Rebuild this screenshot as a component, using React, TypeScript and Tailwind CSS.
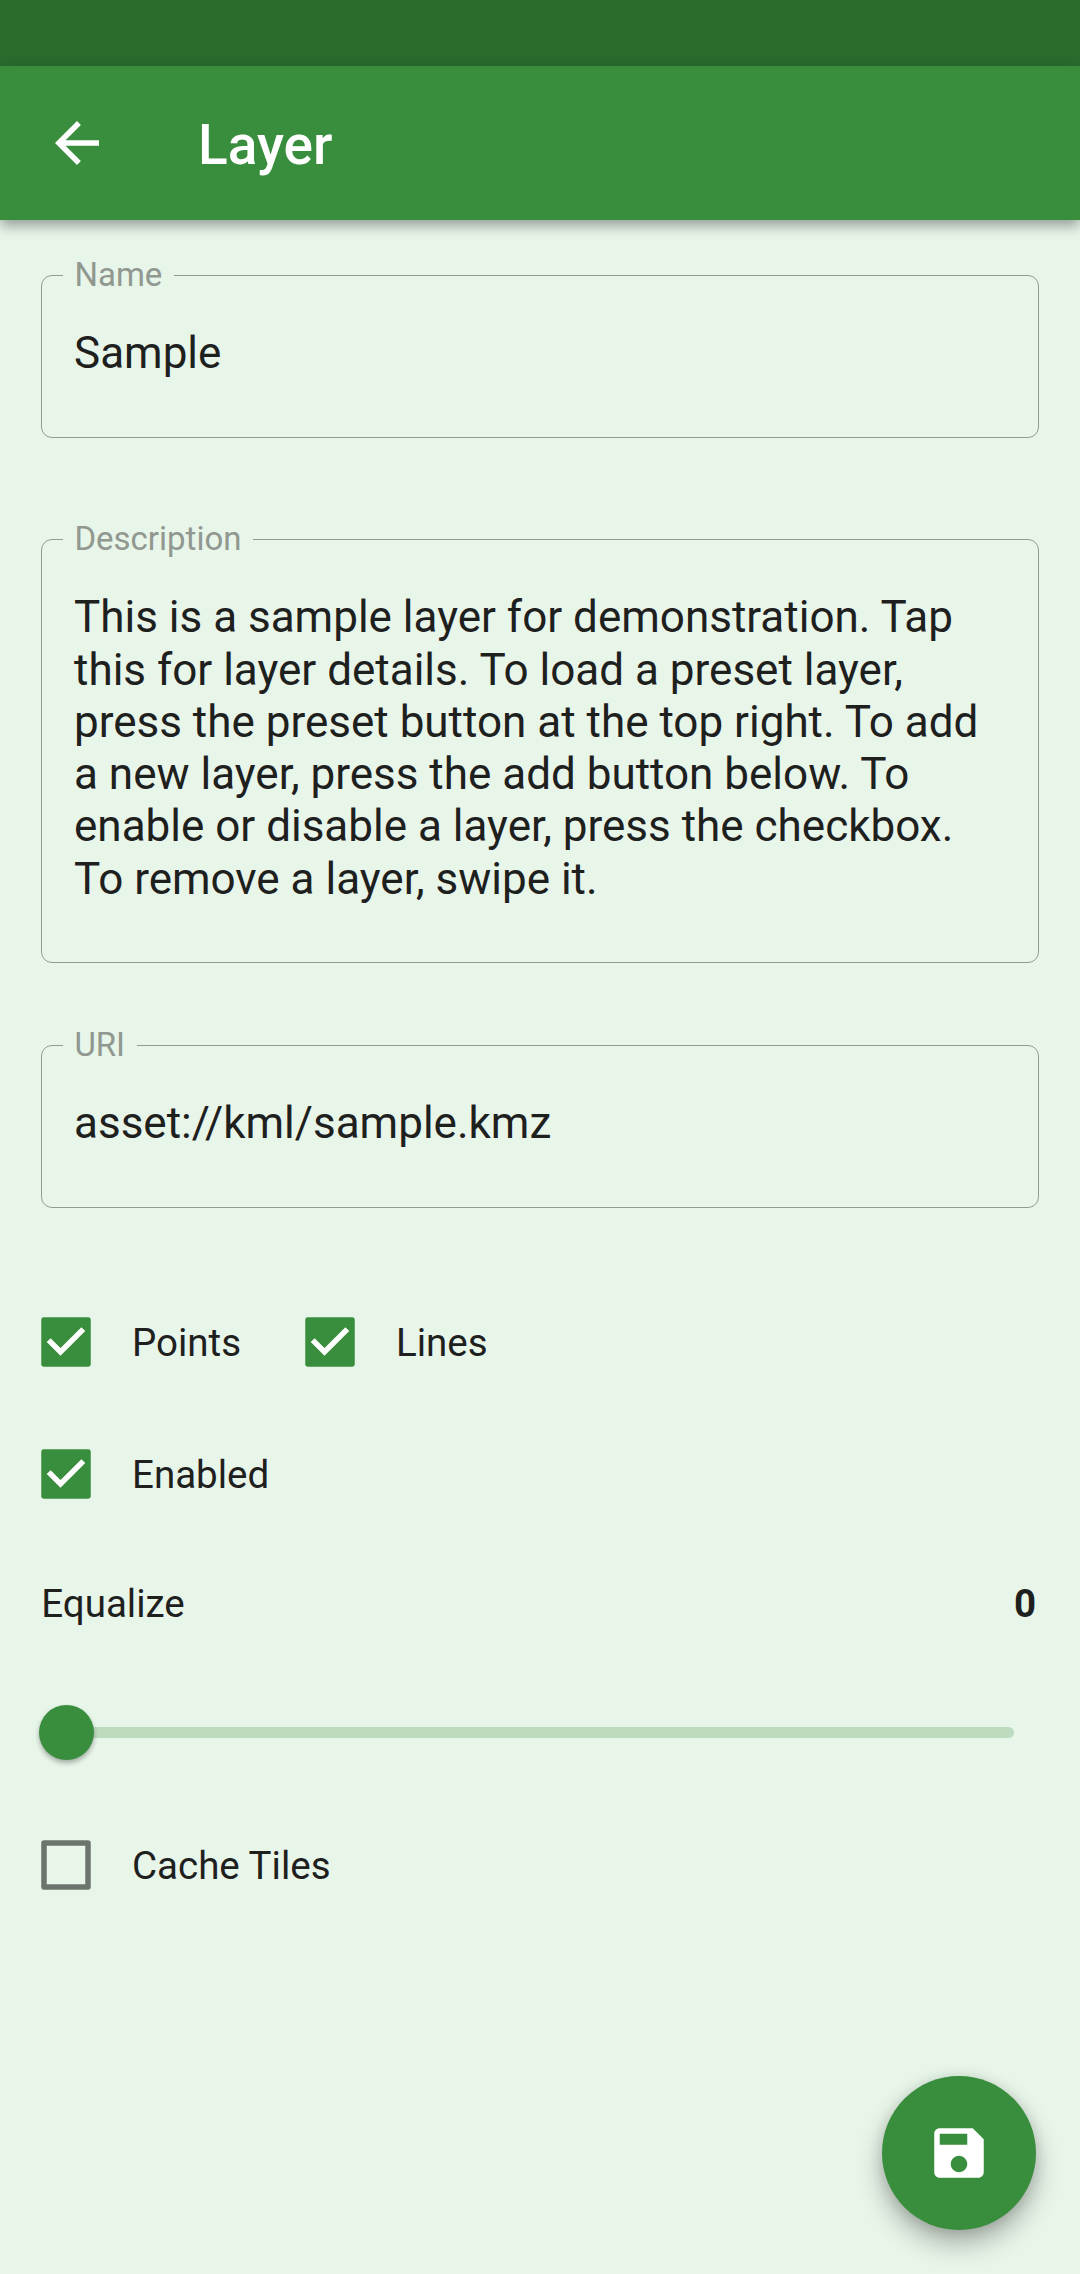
import type { ReactNode } from "react";

function Field({ label, className, children }: { label: string; className: string; children: ReactNode }) {
  return (
    <div className={"relative rounded-[11px] border border-[#929c93] px-8 pt-[51.3px] text-[44px] leading-[52.3px] " + className}>
      <span className="absolute -top-[21px] left-[21px] bg-[#e8f5e9] px-[11.4px] text-[33px] leading-[39px] text-[#909890]">
        {label}
      </span>
      {children}
    </div>
  );
}

function Check({ label, checked, className = "" }: { label: string; checked: boolean; className?: string }) {
  return (
    <div className={"flex h-[132px] items-center " + className}>
      <svg viewBox="0 0 24 24" className={checked ? "size-[66px] text-[#388e3c]" : "size-[66px] text-[#6c756d]"} fill="currentColor">
        {checked ? (
          <>
            <rect x="3" y="3" width="18" height="18" rx="0.9" />
            <path fill="none" stroke="#fff" strokeWidth="2" d="M5.7 11.3 10 15.6 18.3 7.3" />
          </>
        ) : (
          <path fillRule="evenodd" d="M4 3h16a1 1 0 0 1 1 1v16a1 1 0 0 1-1 1H4a1 1 0 0 1-1-1V4a1 1 0 0 1 1-1Zm1 2v14h14V5Z" />
        )}
      </svg>
      <span className="ml-[32.75px] mt-[2px] text-[38.5px] leading-[46px]">{label}</span>
    </div>
  );
}

export default function App() {
  return (
    <div className="relative flex h-[2274px] w-[1080px] flex-col overflow-hidden bg-[#e8f5e9] font-['Roboto',sans-serif] text-[#1e201e]">
      <div className="h-[66px] shrink-0 bg-[#2a6a2d]" />
      <header className="flex h-[154px] shrink-0 items-center bg-[#388e3c] pl-11 text-white shadow-[0_6px_12px_rgba(0,0,0,0.35)]">
        <svg viewBox="0 0 24 24" className="size-[66px]" fill="currentColor">
          <path d="M20 11H7.83l5.59-5.59L12 4l-8 8 8 8 1.41-1.41L7.83 13H20v-2z" />
        </svg>
        <h1 className="ml-[88px] mt-[3px] text-[55px] font-medium leading-[64px]">Layer</h1>
      </header>
      <main className="flex flex-col px-[41px] pt-[55px]">
        <Field label="Name" className="h-[163px]">Sample</Field>
        <Field label="Description" className="mt-[101px] h-[424px]">
          This is a sample layer for demonstration. Tap<br />
          this for layer details. To load a preset layer,<br />
          press the preset button at the top right. To add<br />
          a new layer, press the add button below. To<br />
          enable or disable a layer, press the checkbox.<br />
          To remove a layer, swipe it.
        </Field>
        <Field label="URI" className="mt-[82px] h-[163px]">asset://kml/sample.kmz</Field>
        <div className="-ml-[7.75px] mt-[68px] flex">
          <Check label="Points" checked className="w-[264px]" />
          <Check label="Lines" checked />
        </div>
        <Check label="Enabled" checked className="-ml-[7.75px]" />
        <div className="mt-[41px] flex justify-between pl-[0.25px] pr-[3px] text-[38.5px] leading-[46px]">
          <span>Equalize</span>
          <b className="font-bold">0</b>
        </div>
        <div className="-ml-[2.5px] mt-[78px] flex h-[55px] items-center">
          <div className="z-10 size-[55px] shrink-0 rounded-full bg-[#388e3c] shadow-[0_3px_5px_rgba(0,0,0,0.3)]" />
          <div className="-ml-7 mr-[25px] h-[11px] grow rounded-full bg-[#bddcbf]" />
        </div>
        <Check label="Cache Tiles" checked={false} className="-ml-[7.75px] mt-[39px]" />
      </main>
      <button className="absolute bottom-11 right-11 flex size-[154px] items-center justify-center rounded-full bg-[#388e3c] text-white shadow-[0_14px_26px_rgba(0,0,0,0.28),0_2px_14px_rgba(0,0,0,0.12)]">
        <svg viewBox="0 0 24 24" className="size-[66px]" fill="currentColor">
          <path d="M17 3H5c-1.11 0-2 .9-2 2v14c0 1.1.89 2 2 2h14c1.1 0 2-.9 2-2V7l-4-4zm-5 16c-1.66 0-3-1.34-3-3s1.34-3 3-3 3 1.34 3 3-1.34 3-3 3zm3-10H5V5h10v4z" />
        </svg>
      </button>
    </div>
  );
}
